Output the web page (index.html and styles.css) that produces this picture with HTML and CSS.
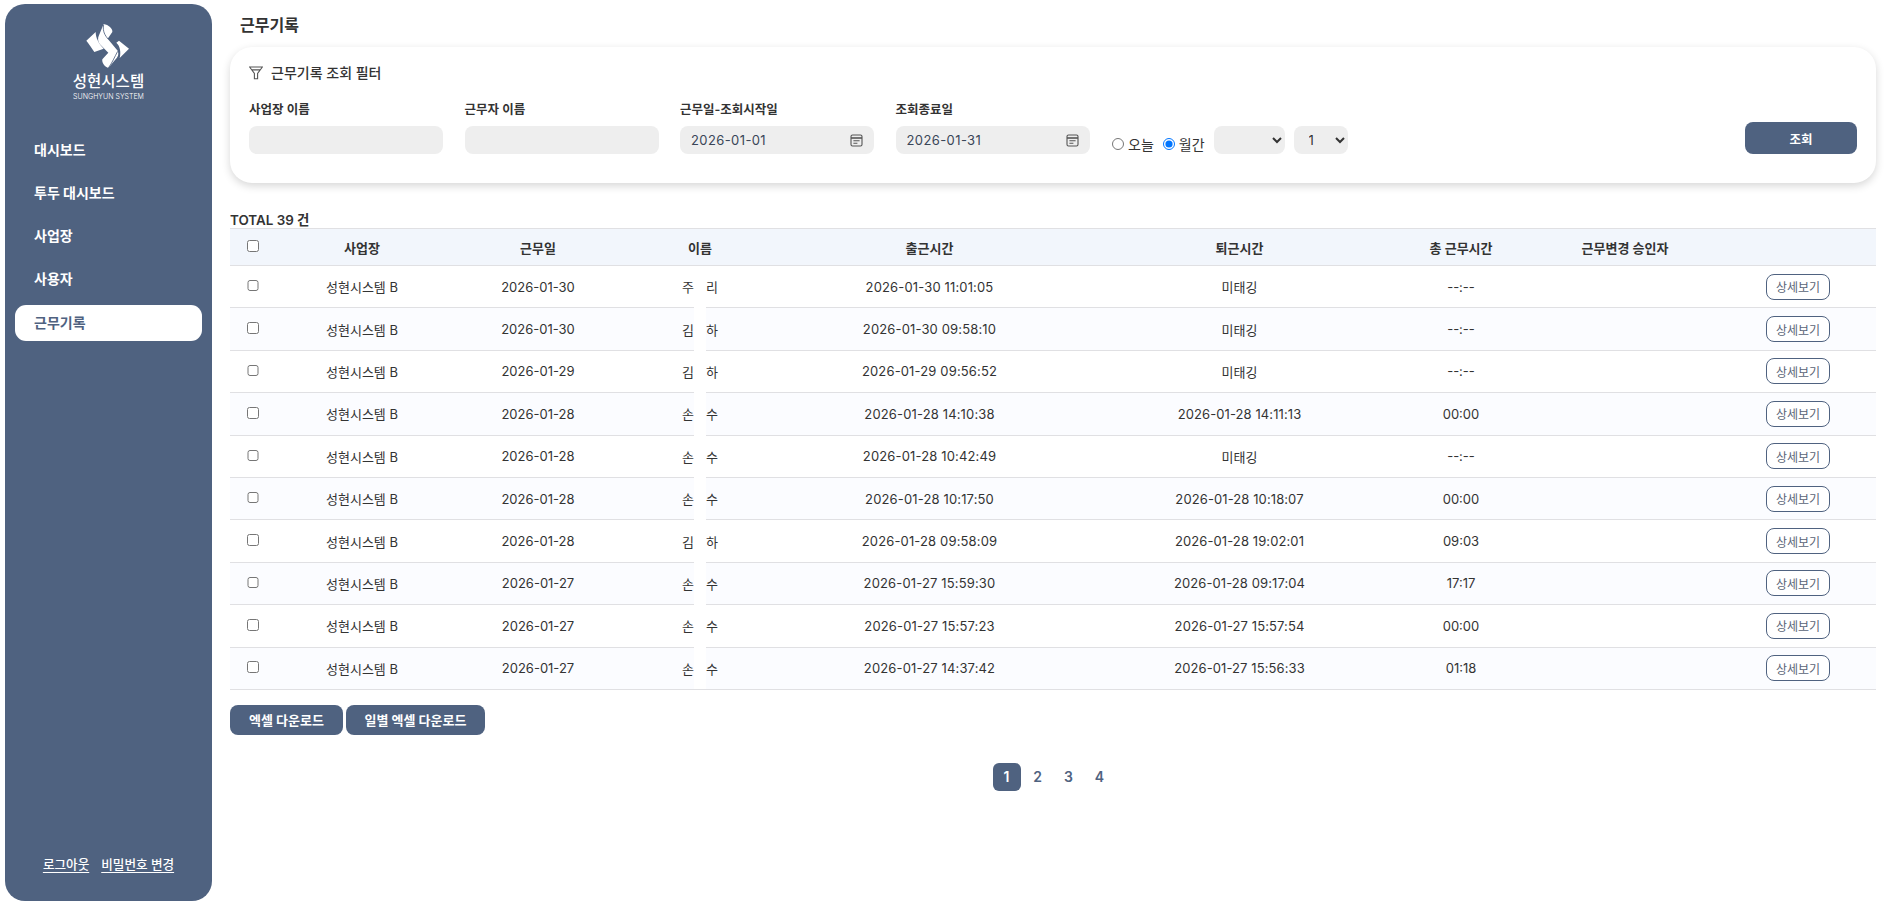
FILE: index.html
```html
<!DOCTYPE html>
<html lang="ko">
<head>
<meta charset="utf-8">
<title>근무기록</title>
<link rel="stylesheet" href="styles.css">
</head>
<body>
<div class="app">
  <aside class="sidebar">
    <div class="logo">
      <svg class="logo-mark" viewBox="0 0 180 168" aria-hidden="true">
        <path fill="#fff" d="M22 68 L50 42 C50 60 60 78 74 92 L46 102 C40 92 30 78 22 68 Z"/>
        <path fill="#fff" d="M60 52 L74 18 C88 20 102 32 100 42 L86 62 L116 98 C120 108 118 116 108 126 L88 150 C76 146 68 134 70 124 L88 104 L62 78 C56 70 56 60 60 52 Z"/>
        <path fill="#fff" d="M120 68 L150 92 L122 120 C126 104 124 84 112 74 Z"/>
        <path fill="none" stroke="#4f6280" stroke-width="2.5" d="M74 20 C70 40 78 52 88 64 M88 150 C100 134 106 118 116 100"/>
      </svg>
      <div class="logo-name">성현시스템</div>
      <div class="logo-sub">SUNGHYUN SYSTEM</div>
    </div>
    <nav class="nav">
      <a class="nav-item">대시보드</a>
      <a class="nav-item">투두 대시보드</a>
      <a class="nav-item">사업장</a>
      <a class="nav-item">사용자</a>
      <a class="nav-item active">근무기록</a>
    </nav>
    <div class="side-foot">
      <a class="foot-link">로그아웃</a>
      <a class="foot-link">비밀번호 변경</a>
    </div>
  </aside>

  <main class="main">
    <h1 class="page-title">근무기록</h1>

    <section class="filter-card">
      <div class="filter-title">
        <svg class="filter-icon" viewBox="0 0 14 14" aria-hidden="true">
          <path d="M.6 1 H13.4 L8.6 7.4 V12.8 H5.4 V7.4 Z M2.8 3.9 H11.2" fill="none" stroke="#555" stroke-width="1.1"/>
        </svg>
        <span>근무기록 조회 필터</span>
      </div>
      <div class="filter-row">
        <div class="field">
          <label class="field-label">사업장 이름</label>
          <input class="control" type="text">
        </div>
        <div class="field">
          <label class="field-label">근무자 이름</label>
          <input class="control" type="text">
        </div>
        <div class="field">
          <label class="field-label">근무일-조회시작일</label>
          <div class="control date">
            <input class="date-input" type="text" value="2026-01-01">
            <svg class="cal" viewBox="0 0 13 13" aria-hidden="true">
              <rect x="1" y="1" width="11" height="11" rx="1.5" fill="none" stroke="#555" stroke-width="1.1"/>
              <path d="M1 4 H12" stroke="#555" stroke-width="1.6"/>
              <path d="M3.4 6.8 H9.6 M3.4 9.2 H7.4" stroke="#555" stroke-width="1.1"/>
            </svg>
          </div>
        </div>
        <div class="field">
          <label class="field-label">조회종료일</label>
          <div class="control date">
            <input class="date-input" type="text" value="2026-01-31">
            <svg class="cal" viewBox="0 0 13 13" aria-hidden="true">
              <rect x="1" y="1" width="11" height="11" rx="1.5" fill="none" stroke="#555" stroke-width="1.1"/>
              <path d="M1 4 H12" stroke="#555" stroke-width="1.6"/>
              <path d="M3.4 6.8 H9.6 M3.4 9.2 H7.4" stroke="#555" stroke-width="1.1"/>
            </svg>
          </div>
        </div>
        <div class="range">
          <label class="radio"><input type="radio" name="range">오늘</label>
          <label class="radio"><input type="radio" name="range" checked>월간</label>
          <select class="control select-year"><option></option></select>
          <select class="control select-month"><option>1</option></select>
        </div>
        <button class="search-btn" type="button">조회</button>
      </div>
    </section>

    <div class="total">TOTAL 39 건</div>

    <table class="grid">
      <thead>
        <tr>
          <th class="c-check"><input type="checkbox"></th>
          <th class="c-site">사업장</th>
          <th class="c-date">근무일</th>
          <th class="c-name">이름</th>
          <th class="c-in">출근시간</th>
          <th class="c-out">퇴근시간</th>
          <th class="c-total">총 근무시간</th>
          <th class="c-appr">근무변경 승인자</th>
          <th class="c-act"></th>
        </tr>
      </thead>
      <tbody>
        <tr><td><input type="checkbox"></td><td>성현시스템 B</td><td>2026-01-30</td><td class="name">주<span class="gap"></span>리</td><td class="in">2026-01-30 11:01:05</td><td class="out">미태깅</td><td>--:--</td><td></td><td><button class="detail" type="button">상세보기</button></td></tr>
        <tr><td><input type="checkbox"></td><td>성현시스템 B</td><td>2026-01-30</td><td class="name">김<span class="gap"></span>하</td><td class="in">2026-01-30 09:58:10</td><td class="out">미태깅</td><td>--:--</td><td></td><td><button class="detail" type="button">상세보기</button></td></tr>
        <tr><td><input type="checkbox"></td><td>성현시스템 B</td><td>2026-01-29</td><td class="name">김<span class="gap"></span>하</td><td class="in">2026-01-29 09:56:52</td><td class="out">미태깅</td><td>--:--</td><td></td><td><button class="detail" type="button">상세보기</button></td></tr>
        <tr><td><input type="checkbox"></td><td>성현시스템 B</td><td>2026-01-28</td><td class="name">손<span class="gap"></span>수</td><td class="in">2026-01-28 14:10:38</td><td class="out">2026-01-28 14:11:13</td><td>00:00</td><td></td><td><button class="detail" type="button">상세보기</button></td></tr>
        <tr><td><input type="checkbox"></td><td>성현시스템 B</td><td>2026-01-28</td><td class="name">손<span class="gap"></span>수</td><td class="in">2026-01-28 10:42:49</td><td class="out">미태깅</td><td>--:--</td><td></td><td><button class="detail" type="button">상세보기</button></td></tr>
        <tr><td><input type="checkbox"></td><td>성현시스템 B</td><td>2026-01-28</td><td class="name">손<span class="gap"></span>수</td><td class="in">2026-01-28 10:17:50</td><td class="out">2026-01-28 10:18:07</td><td>00:00</td><td></td><td><button class="detail" type="button">상세보기</button></td></tr>
        <tr><td><input type="checkbox"></td><td>성현시스템 B</td><td>2026-01-28</td><td class="name">김<span class="gap"></span>하</td><td class="in">2026-01-28 09:58:09</td><td class="out">2026-01-28 19:02:01</td><td>09:03</td><td></td><td><button class="detail" type="button">상세보기</button></td></tr>
        <tr><td><input type="checkbox"></td><td>성현시스템 B</td><td>2026-01-27</td><td class="name">손<span class="gap"></span>수</td><td class="in">2026-01-27 15:59:30</td><td class="out">2026-01-28 09:17:04</td><td>17:17</td><td></td><td><button class="detail" type="button">상세보기</button></td></tr>
        <tr><td><input type="checkbox"></td><td>성현시스템 B</td><td>2026-01-27</td><td class="name">손<span class="gap"></span>수</td><td class="in">2026-01-27 15:57:23</td><td class="out">2026-01-27 15:57:54</td><td>00:00</td><td></td><td><button class="detail" type="button">상세보기</button></td></tr>
        <tr><td><input type="checkbox"></td><td>성현시스템 B</td><td>2026-01-27</td><td class="name">손<span class="gap"></span>수</td><td class="in">2026-01-27 14:37:42</td><td class="out">2026-01-27 15:56:33</td><td>01:18</td><td></td><td><button class="detail" type="button">상세보기</button></td></tr>
      </tbody>
    </table>

    <div class="export">
      <button class="export-btn" type="button">엑셀 다운로드</button>
      <button class="export-btn wide" type="button">일별 엑셀 다운로드</button>
    </div>

    <div class="pager">
      <a class="page current">1</a>
      <a class="page">2</a>
      <a class="page">3</a>
      <a class="page">4</a>
    </div>
  </main>
</div>
</body>
</html>
```

FILE: styles.css
```css
* { box-sizing: border-box; }
html, body { margin: 0; height: 100%; background: #fff; }
body, input, select, button {
  font-family: Inter, "Noto Sans CJK KR", "Noto Sans", sans-serif;
}
body { color: #333; font-size: 13px; }

.app { display: flex; height: 904px; padding: 4px 0 3px 5px; }

/* sidebar */
.sidebar {
  width: 207px;
  flex: none;
  background: #4f6280;
  border-radius: 20px;
  display: flex;
  flex-direction: column;
  padding: 14px 10px 28px;
  color: #fff;
}
.logo { display: flex; flex-direction: column; align-items: center; }
.logo-mark { width: 60px; height: 56px; display: block; }
.logo-name { font-size: 15.5px; font-weight: 500; line-height: 20px; margin-top: -2px; }
.logo-sub { font-size: 7px; font-weight: 300; line-height: 9px; letter-spacing: 0; }
.nav { display: flex; flex-direction: column; gap: 7.3px; margin-top: 30.5px; }
.nav-item {
  height: 36px;
  line-height: 36px;
  padding-left: 19px;
  border-radius: 11px;
  font-size: 14px;
  font-weight: 700;
  color: #fff;
}
.nav-item.active { background: #fff; color: #4f6280; }
.side-foot { margin-top: auto; display: flex; justify-content: center; gap: 12px; }
.foot-link { font-size: 12.6px; font-weight: 500; color: #fff; text-decoration: underline; text-underline-offset: 3px; }

/* main */
.main { flex: 1; min-width: 0; padding: 0 26px 0 18px; }
.page-title { margin: 0; padding: 1px 0 0 10px; height: 40px; font-size: 16px; font-weight: 600; line-height: 40px; color: #333; }

.filter-card {
  margin-top: 3px;
  height: 136px;
  background: #fff;
  border-radius: 22px;
  box-shadow: 0 3px 8px rgba(0, 0, 0, .16);
  padding: 16px 19px 0;
}
.filter-title { display: flex; align-items: center; gap: 8px; font-size: 14px; font-weight: 500; line-height: 20px; }
.filter-icon { width: 14px; height: 14px; flex: none; }
.filter-row { display: flex; align-items: flex-end; margin-top: 19px; }
.field { width: 194px; margin-right: 21.5px; flex: none; }
.field-label { display: block; font-size: 12.5px; font-weight: 600; line-height: 16px; margin-bottom: 8px; }
.control {
  display: block;
  height: 28px;
  width: 100%;
  border: 0;
  border-radius: 8px;
  background: #eeeeee;
  padding: 0 11px;
  font-size: 13px;
  color: #333;
  outline: 0;
}
.control.date { display: flex; align-items: center; }
.date-input {
  flex: 1;
  min-width: 0;
  border: 0;
  padding: 0;
  background: transparent;
  font-size: 13px;
  letter-spacing: .4px;
  color: #3a4658;
  outline: 0;
}
.cal { width: 13px; height: 13px; flex: none; }
.range { display: flex; height: 28px; flex: none; padding-left: 1px; }
.radio { display: flex; align-items: center; padding-top: 8px; font-size: 14px; margin-right: 9px; }
.radio input { margin: 0 4px 0 0; width: 12px; height: 12px; }
.select-year { width: 71px; }
.select-month { width: 54px; margin-left: 9px; }
.search-btn {
  margin-left: auto;
  width: 112px;
  height: 32px;
  border: 0;
  border-radius: 8px;
  background: #4f6280;
  color: #fff;
  font-size: 12.5px;
  font-weight: 600;
}

.total { margin-top: 29px; font-size: 13.4px; font-weight: 600; line-height: 16px; }

.grid { width: 100%; table-layout: fixed; border-collapse: separate; border-spacing: 0; }
.grid th {
  height: 38px;
  background: #f2f6fc;
  border-top: 1px solid #e0e0e3;
  border-bottom: 1px solid #e0e0e3;
  font-size: 13px;
  font-weight: 600;
  text-align: center;
  padding: 0;
}
.grid td {
  height: 42.4px;
  border-bottom: 1px solid #e0e0e3;
  font-size: 13px;
  text-align: center;
  padding: 0;
}
.grid input[type="checkbox"] { display: block; margin: -2px auto 0; width: 11.5px; height: 11.5px; }
.grid tbody tr:nth-child(even) td { background: #fbfcff; }
.c-check { width: 46px; }
.c-site { width: 172px; }
.c-date { width: 180px; }
.c-name { width: 144px; }
.c-in { width: 315px; }
.c-out { width: 305px; }
.c-total { width: 138px; }
.c-appr { width: 190px; }
.c-act { width: 156px; }
.grid td.in { letter-spacing: .15px; }
.grid td.out { letter-spacing: .1px; }
.grid td.name { position: relative; }
.gap { display: inline-block; width: 12px; }
.grid tbody tr + tr td.name::after {
  content: "";
  position: absolute;
  left: 50%;
  margin-left: -6px;
  width: 12px;
  top: -1px;
  bottom: -1px;
  background: #fff;
}
.grid tbody tr:last-child td.name::after { bottom: 0; }
.detail {
  width: 64px;
  height: 26px;
  padding: 0;
  background: #fff;
  border: 1px solid #4f6280;
  border-radius: 8px;
  font-size: 12px;
  color: #5a6577;
}

.export { display: flex; gap: 3px; margin-top: 15px; }
.export-btn {
  width: 113px;
  height: 30px;
  border: 0;
  border-radius: 8px;
  background: #4f6280;
  color: #fff;
  font-size: 13px;
  font-weight: 700;
}
.export-btn.wide { width: 139px; }

.pager { display: flex; justify-content: center; gap: 3px; margin-top: 28px; }
.page {
  width: 28px;
  height: 28px;
  line-height: 28px;
  text-align: center;
  border-radius: 6px;
  font-size: 14px;
  font-weight: 600;
  color: #4f6280;
}
.page.current { background: #4f6280; color: #fff; }
```
